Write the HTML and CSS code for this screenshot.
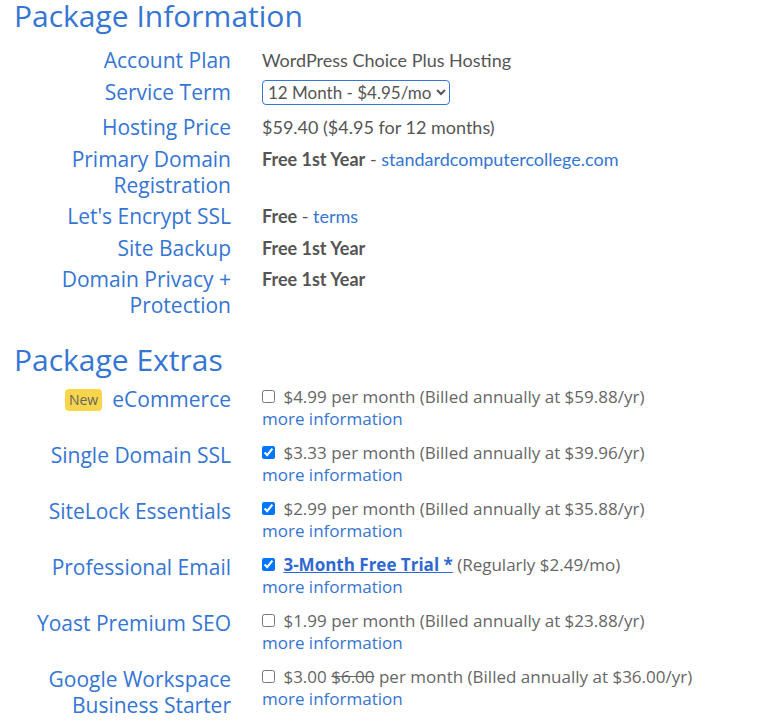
FILE: index.html
```html
<!DOCTYPE html>
<html lang="en">
<head>
    <meta charset="UTF-8">
    <meta name="viewport" content="width=device-width, initial-scale=1.0">
    <title>Package - Checkout</title>
    <link rel="stylesheet" href="styles.css">
</head>
<body>
    <section class="package-info">
        <h2>Package Information</h2>
        <div class="info-grid">
            <div class="label">Account Plan</div>
            <div class="value">WordPress Choice Plus Hosting</div>

            <div class="label">Service Term</div>
            <div class="value select-cell">
                <select class="term-select">
                    <option>12 Month - $4.95/mo</option>
                    <option>24 Month - $4.45/mo</option>
                    <option>36 Month - $3.95/mo</option>
                </select>
            </div>

            <div class="label">Hosting Price</div>
            <div class="value">$59.40 ($4.95 for 12 months)</div>

            <div class="label">Primary Domain Registration</div>
            <div class="value"><strong>Free 1st Year</strong> - <a href="#">standardcomputercollege.com</a></div>

            <div class="label">Let's Encrypt SSL</div>
            <div class="value"><strong>Free</strong> - <a href="#">terms</a></div>

            <div class="label">Site Backup</div>
            <div class="value"><strong>Free 1st Year</strong></div>

            <div class="label">Domain Privacy + Protection</div>
            <div class="value"><strong>Free 1st Year</strong></div>
        </div>
    </section>

    <section class="package-extras">
        <h2>Package Extras</h2>
        <div class="extras-grid">
            <div class="label"><span class="badge">New</span>eCommerce</div>
            <div class="extra">
                <label><input type="checkbox"> $4.99 per month (Billed annually at $59.88/yr)</label>
                <a href="#">more information</a>
            </div>

            <div class="label">Single Domain SSL</div>
            <div class="extra">
                <label><input type="checkbox" checked> $3.33 per month (Billed annually at $39.96/yr)</label>
                <a href="#">more information</a>
            </div>

            <div class="label">SiteLock Essentials</div>
            <div class="extra">
                <label><input type="checkbox" checked> $2.99 per month (Billed annually at $35.88/yr)</label>
                <a href="#">more information</a>
            </div>

            <div class="label">Professional Email</div>
            <div class="extra">
                <label><input type="checkbox" checked> <a href="#" class="trial">3-Month Free Trial *</a> (Regularly $2.49/mo)</label>
                <a href="#">more information</a>
            </div>

            <div class="label">Yoast Premium SEO</div>
            <div class="extra">
                <label><input type="checkbox"> $1.99 per month (Billed annually at $23.88/yr)</label>
                <a href="#">more information</a>
            </div>

            <div class="label">Google Workspace Business Starter</div>
            <div class="extra">
                <label><input type="checkbox"> $3.00 <s>$6.00</s> per month (Billed annually at $36.00/yr)</label>
                <a href="#">more information</a>
            </div>
        </div>
    </section>
</body>
</html>
```

FILE: styles.css
```css
/* Checkout - package info and extras */
body {
    font-family: "Open Sans", Arial, sans-serif;
    margin: 0;
    padding: 0 0 0 14px;
    background-color: #fff;
    color: #666;
}
h2 {
    font-weight: 400;
    font-size: 30px;
    line-height: 32px;
    color: #3575d3;
    margin: 0;
}
.package-info h2 {
    margin-bottom: 15px;
}
.package-extras {
    margin-top: 26px;
}
.package-extras h2 {
    margin-bottom: 10px;
}
.info-grid,
.extras-grid {
    display: grid;
    grid-template-columns: 217px 1fr;
    column-gap: 31px;
}
.info-grid {
    row-gap: 5.5px;
}
.extras-grid {
    row-gap: 12px;
}
.label {
    text-align: right;
    font-size: 21px;
    line-height: 26px;
    color: #3575d3;
}
.value {
    font-family: Lato, "Liberation Sans", sans-serif;
    font-size: 18px;
    line-height: 26px;
    color: #555;
}
.value strong {
    font-weight: 700;
}
.select-cell {
    height: 30px;
}
a {
    color: #3575d3;
    text-decoration: none;
}
.term-select {
    font-family: Lato, "Liberation Sans", sans-serif;
    font-size: 17px;
    color: #555;
    height: 25px;
    margin-top: 1px;
    border: 1px solid #3575d3;
    border-radius: 4px;
    background: #fff;
    padding: 0 1px;
}
.badge {
    display: inline-block;
    background: #f9d54a;
    color: #666;
    font-size: 14px;
    line-height: 22px;
    padding: 0 4px;
    border-radius: 4px;
    margin-right: 10px;
    vertical-align: 2px;
}
.extra {
    font-size: 17px;
    line-height: 22px;
}
.extra label {
    display: block;
}
.extra input[type="checkbox"] {
    width: 13px;
    height: 13px;
    margin: 0 4px 0 0;
    vertical-align: 0;
}
.extra a {
    display: block;
}
.extra a.trial {
    display: inline;
    font-weight: 700;
    color: #2f68d1;
    text-decoration: underline;
}
```
